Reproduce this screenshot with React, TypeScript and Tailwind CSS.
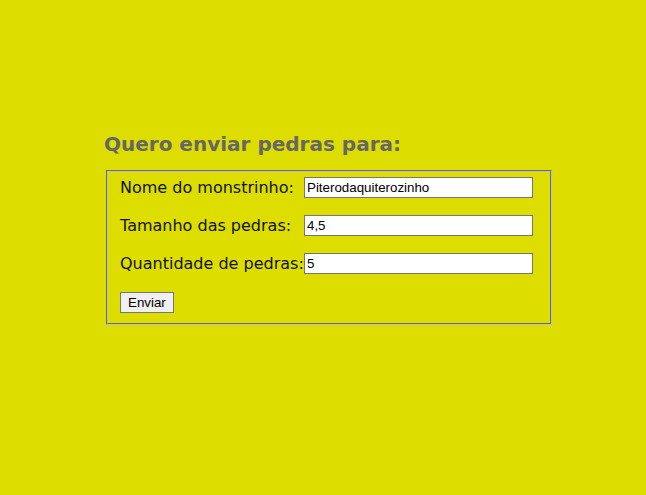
import React from 'react';

const campos = [
  { label: 'Nome do monstrinho:', valor: 'Piterodaquiterozinho' },
  { label: 'Tamanho das pedras:', valor: '4,5' },
  { label: 'Quantidade de pedras:', valor: '5' },
];

export default function App() {
  return (
    <div className="min-h-[495px] w-full bg-[#dddd00] pt-[131px] pl-[104px]">
      <h2 className="font-['DejaVu_Sans',Verdana,sans-serif] text-[20px] font-bold leading-[26px] text-[#666666]">
        Quero enviar pedras para:
      </h2>
      <fieldset className="mt-[13px] ml-[2px] w-[446px] border-2 border-[#c0c0c0] [border-style:groove] pl-[12px] pt-[5px] pb-[10px]">
        <form className="flex flex-col gap-[17px] font-['DejaVu_Sans',Verdana,sans-serif] text-[16px] text-[#111111]">
          {campos.map((c) => (
            <div key={c.label} className="flex h-[21px] items-center">
              <label className="w-[184px] shrink-0 whitespace-nowrap">{c.label}</label>
              <input
                type="text"
                defaultValue={c.valor}
                className="h-[21px] w-[229px] border border-[#767676] bg-white px-[2px] font-['Liberation_Sans',Arial,sans-serif] text-[13.33px] text-black outline-none"
              />
            </div>
          ))}
          <div className="mt-[1px] flex">
            <button
              type="button"
              className="h-[21px] border border-[#767676] bg-[#efefef] px-[7px] font-['Liberation_Sans',Arial,sans-serif] text-[13.33px] leading-none text-black"
            >
              Enviar
            </button>
          </div>
        </form>
      </fieldset>
    </div>
  );
}
